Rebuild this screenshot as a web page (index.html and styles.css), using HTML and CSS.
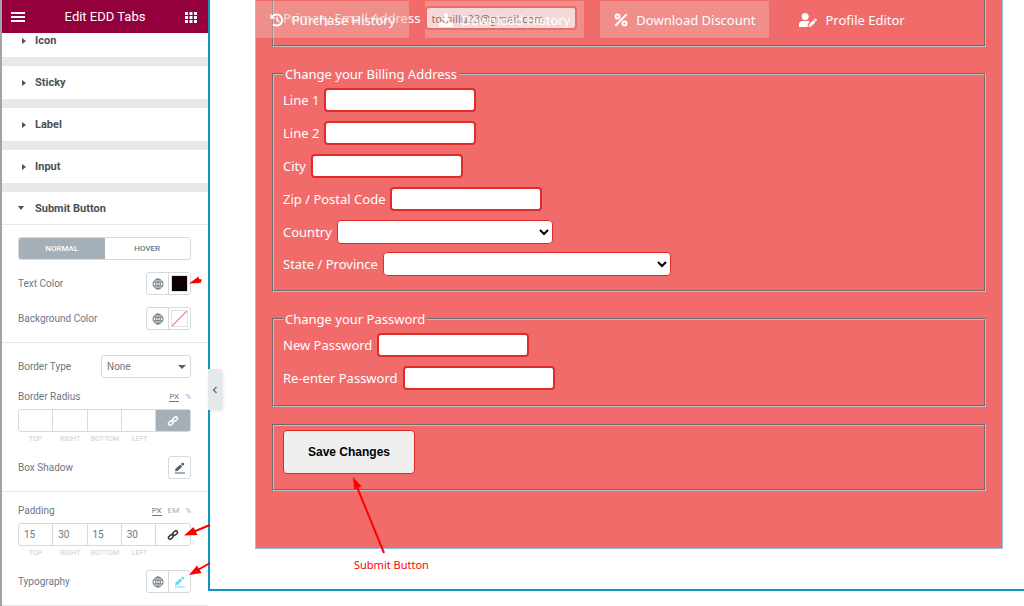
FILE: index.html
```html
<!DOCTYPE html>
<html lang="en">
<head>
    <meta charset="UTF-8">
    <meta name="viewport" content="width=device-width, initial-scale=1.0">
    <title>Edit EDD Tabs</title>
    <link rel="stylesheet" href="styles.css">
</head>
<body>
    <!-- shared icons -->
    <svg class="sprite" aria-hidden="true">
        <symbol id="globe" viewBox="0 0 12 12">
            <g fill="none" stroke="currentColor">
                <circle cx="6" cy="6" r="5"/>
                <ellipse cx="6" cy="6" rx="2.3" ry="5"/>
                <path d="M1.4 4.2h9.2M1.4 7.8h9.2M6 1v10"/>
            </g>
        </symbol>
        <symbol id="pencil" viewBox="0 0 12 12">
            <path fill="currentColor" d="M1 9.3 1.5 6.8 6.3 2.6 8.2 4.7 3.5 8.9zM7 2 8.2 .8Q8.8 .3 9.4.9L10 1.5Q10.5 2.2 10 2.8L8.9 4zM1 10.5h10v1H1z"/>
        </symbol>
        <symbol id="link" viewBox="0 0 12 12">
            <g fill="none" stroke="currentColor" stroke-width="1.5">
                <rect x="-2.6" y="-1.6" width="5.2" height="3.2" rx="1.6" transform="translate(3.8 8) rotate(-45)"/>
                <rect x="-2.6" y="-1.6" width="5.2" height="3.2" rx="1.6" transform="translate(8.2 4) rotate(-45)"/>
            </g>
        </symbol>
    </svg>

    <aside class="panel">
        <header class="panel-header">
            <button class="icon-btn" aria-label="Menu">
                <svg width="14" height="12" viewBox="0 0 14 12" fill="#fff"><path d="M0 1h14v2H0zM0 5h14v2H0zM0 9h14v2H0z"/></svg>
            </button>
            <h1>Edit EDD Tabs</h1>
            <button class="icon-btn" aria-label="Widgets">
                <svg width="12" height="12" viewBox="0 0 12 12" fill="#fff"><path d="M0 1h3v3H0zM4.5 1h3v3h-3zM9 1h3v3H9zM0 5h3v3H0zM4.5 5h3v3h-3zM9 5h3v3H9zM0 9h3v3H0zM4.5 9h3v3h-3zM9 9h3v3H9z"/></svg>
            </button>
        </header>

        <div class="sections">
            <button class="section-title"><span class="caret"></span>Icon</button>
            <button class="section-title"><span class="caret"></span>Sticky</button>
            <button class="section-title"><span class="caret"></span>Label</button>
            <button class="section-title"><span class="caret"></span>Input</button>
            <button class="section-title open"><span class="caret"></span>Submit Button</button>
        </div>

        <div class="group">
            <div class="tabs">
                <button class="tab active">NORMAL</button>
                <button class="tab">HOVER</button>
            </div>
            <div class="control">
                <span>Text Color</span>
                <div class="btn-set">
                    <button aria-label="Global color"><svg class="globe"><use href="#globe"/></svg></button>
                    <button aria-label="Pick text color"><span class="swatch black"></span></button>
                </div>
            </div>
            <div class="control">
                <span>Background Color</span>
                <div class="btn-set">
                    <button aria-label="Global color"><svg class="globe"><use href="#globe"/></svg></button>
                    <button aria-label="Pick background color"><span class="swatch empty"></span></button>
                </div>
            </div>
        </div>

        <div class="group">
            <div class="control">
                <label for="border-type">Border Type</label>
                <div class="select-wrap">
                    <select id="border-type"><option>None</option></select>
                </div>
            </div>
            <div class="dimension">
                <div class="units"><span>Border Radius</span><a href="#" class="on">PX</a><a href="#">%</a></div>
                <div class="dims">
                    <input type="text" id="r-top"><input type="text" id="r-right"><input type="text" id="r-bottom"><input type="text" id="r-left">
                    <button class="linked" aria-label="Link values"><svg><use href="#link"/></svg></button>
                </div>
                <div class="dim-labels"><label for="r-top">TOP</label><label for="r-right">RIGHT</label><label for="r-bottom">BOTTOM</label><label for="r-left">LEFT</label></div>
            </div>
            <div class="control">
                <span>Box Shadow</span>
                <div class="btn-set">
                    <button aria-label="Edit shadow"><svg><use href="#pencil"/></svg></button>
                </div>
            </div>
        </div>

        <div class="group">
            <div class="dimension">
                <div class="units"><span>Padding</span><a href="#" class="on">PX</a><a href="#">EM</a><a href="#">%</a></div>
                <div class="dims">
                    <input type="text" id="p-top" value="15"><input type="text" id="p-right" value="30"><input type="text" id="p-bottom" value="15"><input type="text" id="p-left" value="30">
                    <button aria-label="Link values"><svg><use href="#link"/></svg></button>
                </div>
                <div class="dim-labels"><label for="p-top">TOP</label><label for="p-right">RIGHT</label><label for="p-bottom">BOTTOM</label><label for="p-left">LEFT</label></div>
            </div>
            <div class="control">
                <span>Typography</span>
                <div class="btn-set">
                    <button aria-label="Global font"><svg class="globe"><use href="#globe"/></svg></button>
                    <button class="blue" aria-label="Edit typography"><svg><use href="#pencil"/></svg></button>
                </div>
            </div>
        </div>
    </aside>

    <main class="preview">
        <button class="collapse" aria-label="Hide panel">
            <svg width="6" height="8" viewBox="0 0 6 8" fill="none" stroke="#6d7882" stroke-width="1.5"><path d="M4.5 1 1.5 4l3 3"/></svg>
        </button>

        <div class="widget">
            <nav class="edd-tabs">
                <a href="#">
                    <svg width="14" height="14" viewBox="0 0 14 14"><path d="M2.6 3.3A5.5 5.5 0 1 1 3 11.2" fill="none" stroke="#fff" stroke-width="2"/><path d="M.3 .8v5h5z" fill="#fff"/><path d="M7.2 4v3.3l2 1.5" fill="none" stroke="#fff" stroke-width="1.6"/></svg>
                    Purchase History
                </a>
                <a href="#">
                    <svg width="14" height="14" viewBox="0 0 14 14" fill="#fff"><path d="M5.4 0h3.2v5h3L7 9.6 2.4 5h3zM.7 9.3h3.2L7 12l3.1-2.7h3.2q.7 0 .7.7v3.3q0 .7-.7.7H.7Q0 14 0 13.3V10q0-.7.7-.7z"/></svg>
                    Download History
                </a>
                <a href="#">
                    <svg width="14" height="14" viewBox="0 0 14 14" fill="none" stroke="#fff" stroke-width="2"><circle cx="3.5" cy="3.5" r="2"/><circle cx="10.5" cy="10.5" r="2"/><path d="M12.7 1.3 1.3 12.7"/></svg>
                    Download Discount
                </a>
                <a href="#" class="current">
                    <svg width="18" height="14" viewBox="0 0 18 14" fill="#fff"><circle cx="6.2" cy="3.5" r="3.5"/><path d="M0 14v-2.5Q0 8 3.7 8h5q1.2 0 2.2.8L9 10.8 8.6 14zM9.7 14l.4-2.6 4.4-4.4 2 2-4.4 4.5zM15.1 6.4l.8-.7q.4-.4.8 0l1.1 1.1q.4.4 0 .8l-.8.8z"/></svg>
                    Profile Editor
                </a>
            </nav>

            <form class="profile">
                <fieldset class="email">
                    <div class="field"><label for="email">Primary Email Address</label><input type="email" id="email" value="tomillu23@gmail.com"></div>
                </fieldset>
                <fieldset>
                    <legend>Change your Billing Address</legend>
                    <div class="field"><label for="line1">Line 1</label><input type="text" id="line1"></div>
                    <div class="field"><label for="line2">Line 2</label><input type="text" id="line2"></div>
                    <div class="field"><label for="city">City</label><input type="text" id="city"></div>
                    <div class="field"><label for="zip">Zip / Postal Code</label><input type="text" id="zip"></div>
                    <div class="field drop"><label for="country">Country</label><select id="country"><option></option></select></div>
                    <div class="field drop"><label for="state">State / Province</label><select id="state" class="wide"><option></option></select></div>
                </fieldset>
                <fieldset>
                    <legend>Change your Password</legend>
                    <div class="field"><label for="pass1">New Password</label><input type="password" id="pass1"></div>
                    <div class="field"><label for="pass2">Re-enter Password</label><input type="password" id="pass2"></div>
                </fieldset>
                <fieldset class="submit">
                    <button type="button" class="save">Save Changes</button>
                </fieldset>
            </form>
        </div>
    </main>

    <!-- arrows and note on top of the page -->
    <svg class="marks" width="440" height="606" viewBox="0 0 440 606" fill="#fe0000" stroke="#fe0000">
        <path stroke="none" d="M189 283.5 198.5 276.5 199 279 202 279.5 200.5 283z"/>
        <path stroke-width="2" d="M210 525 193 532"/><path stroke="none" d="M184 535.5 193.5 527 197.5 535z"/>
        <path stroke-width="2" d="M210 563 196 571"/><path stroke="none" d="M189 575 197 565.5 201.5 573z"/>
        <path stroke-width="2" d="M384 553 357 487"/><path stroke="none" d="M353 477 354 489.5 361.5 486.5z"/>
    </svg>
    <p class="note">Submit Button</p>
</body>
</html>
```
FILE: styles.css
```css
* {
    box-sizing: border-box;
}
body {
    position: relative;
    display: flex;
    min-height: 100vh;
    margin: 0;
    background: #fff;
    color: #6d7882;
    font-family: Roboto, sans-serif;
    font-size: 10px;
    overflow: hidden;
}
button, input, select {
    margin: 0;
    padding: 0;
    border: 0;
    font-family: inherit;
    font-size: inherit;
    color: inherit;
}
button {
    background: none;
    cursor: pointer;
}
a {
    text-decoration: none;
    color: inherit;
}
.sprite {
    position: absolute;
    width: 0;
    height: 0;
}

/* left panel */
.panel {
    flex: none;
    width: 208px;
    border-left: 2px solid #a3a3a3;
    background: #fff;
}
.panel-header {
    position: relative;
    z-index: 1;
    display: flex;
    align-items: center;
    justify-content: space-between;
    height: 33px;
    padding: 0 11px 0 9px;
    background: #93003c;
    color: #fff;
}
.panel-header h1 {
    margin: 0;
    font-size: 13px;
    font-weight: 400;
}
.icon-btn {
    display: flex;
}
.sections {
    display: flex;
    flex-direction: column;
    gap: 9px;
    margin-top: -9px;
    background: #e6e9ec;
}
.section-title {
    display: flex;
    align-items: center;
    height: 33px;
    padding-left: 16px;
    background: #fff;
    color: #495157;
    font-size: 11px;
    font-weight: 700;
}
.caret {
    width: 17px;
}
.caret::before {
    content: "";
    display: block;
    width: 0;
    margin-left: 4px;
    border: 3px solid transparent;
    border-left: 4px solid #495157;
    border-right: 0;
}
.open {
    border-bottom: 1px solid #e6e9ec;
}
.open .caret::before {
    margin-left: 0;
    border: 3px solid transparent;
    border-top: 4px solid #495157;
    border-bottom: 0;
}
.group {
    display: flex;
    flex-direction: column;
    gap: 12px;
    padding: 12px 17px 12px 16px;
    border-bottom: 1px solid #e6e9ec;
}
.tabs {
    display: flex;
    height: 23px;
    border: 1px solid #d5dadf;
    border-radius: 3px;
    overflow: hidden;
}
.tab {
    flex: 1;
    font-size: 8px;
    font-weight: 500;
}
.tab.active {
    background: #a4afb7;
    color: #fff;
}
.control {
    display: flex;
    align-items: center;
    justify-content: space-between;
}
.btn-set {
    display: flex;
    height: 23px;
    border: 1px solid #d5dadf;
    border-radius: 3px;
}
.btn-set button {
    display: flex;
    align-items: center;
    justify-content: center;
    width: 21px;
    color: #556068;
}
.btn-set button + button {
    width: 22px;
    border-left: 1px solid #d5dadf;
}
.btn-set svg, .dims svg {
    width: 12px;
    height: 12px;
}
.btn-set .globe {
    color: #6d7882;
}
.btn-set .blue {
    color: #71d7f7;
}
.swatch {
    width: 17px;
    height: 17px;
    border: 1px solid #e0e0e0;
}
.swatch.black {
    background: #0d0000;
}
.swatch.empty {
    background: linear-gradient(to bottom right, #fff 46%, #f77 48%, #f77 52%, #fff 54%);
}
.select-wrap {
    position: relative;
    width: 90px;
}
.select-wrap::after {
    content: "";
    position: absolute;
    top: 10px;
    right: 5px;
    border: 4px solid transparent;
    border-top-color: #556068;
    border-bottom: 0;
    pointer-events: none;
}
.select-wrap select {
    width: 100%;
    height: 23px;
    padding-left: 5px;
    border: 1px solid #d5dadf;
    border-radius: 3px;
    background: #fff;
    appearance: none;
}
.units {
    display: flex;
    align-items: center;
    height: 13px;
    margin-bottom: 6px;
}
.units span {
    flex: 1;
}
.units a {
    margin-left: 6px;
    font-size: 8px;
    line-height: 9px;
    color: #a4afb7;
}
.units .on {
    border-bottom: 1px solid #6d7882;
    color: #6d7882;
}
.dims {
    display: flex;
    height: 23px;
    border: 1px solid #d5dadf;
    border-radius: 3px;
}
.dims input {
    flex: 1;
    width: 0;
    padding-left: 5px;
    border-right: 1px solid #d5dadf;
    background: none;
}
.dims button {
    display: flex;
    align-items: center;
    justify-content: center;
    width: 34px;
    color: #333;
}
.dims .linked {
    background: #a4afb7;
    color: #fff;
}
.dim-labels {
    display: flex;
    margin-top: 3px;
    padding-right: 34px;
    font-size: 7px;
    line-height: 9px;
    color: #c8ced4;
}
.dim-labels label {
    flex: 1;
    width: 0;
    text-align: center;
}

/* page preview */
.preview {
    position: relative;
    flex: 1;
    align-self: flex-start;
    min-width: 0;
    padding: 0 21px 40px 45px;
    border-left: 2px solid #0f94bd;
    border-bottom: 2px solid #0f94bd;
    color: #fff;
    font-family: "Noto Sans", sans-serif;
    font-size: 13px;
}
.collapse {
    position: absolute;
    top: 369px;
    left: -2px;
    display: flex;
    align-items: center;
    justify-content: center;
    width: 14px;
    height: 41px;
    border-radius: 0 3px 3px 0;
    background: #e6e9ec;
    box-shadow: 1px 1px 3px rgba(0, 0, 0, 0.12);
}
.widget {
    position: relative;
    padding: 0 16px 57px;
    border: 1px solid #8fc6de;
    border-top: 0;
    background: #f26b6b;
}
.edd-tabs {
    position: absolute;
    top: 1px;
    left: 0;
    display: flex;
    gap: 16px;
}
.edd-tabs a {
    display: flex;
    align-items: center;
    gap: 8px;
    height: 37px;
    padding: 0 14px;
    background: rgba(238, 178, 174, 0.5);
    white-space: nowrap;
}
.edd-tabs .current {
    background: none;
}
fieldset {
    min-width: 0;
    margin: 0 0 17px;
    padding: 4px 9px 15px;
    border: 2px groove #c0c0c0;
}
.email {
    padding-top: 6px;
    border-top: 0;
}
legend {
    padding: 0 2px;
    line-height: 20px;
}
.field {
    display: flex;
    align-items: center;
    gap: 5px;
    height: 24px;
    margin-bottom: 9px;
    white-space: nowrap;
}
.field.drop {
    height: 23px;
}
.field:last-child {
    margin-bottom: 0;
}
.field input, .field select {
    width: 152px;
    height: 24px;
    padding: 0 4px;
    border: 2px solid #e02b2b;
    border-radius: 4px;
    background: #fff;
    color: #333;
    font-size: 11px;
}
.field select {
    width: 216px;
    border-width: 1px;
    color: #000;
}
.field .wide {
    width: 288px;
}
.submit {
    margin-bottom: 0;
}
.save {
    display: block;
    padding: 13px 24px;
    border: 1px solid #e02b2b;
    border-radius: 4px;
    background: #efefef;
    color: #000;
    font-family: "Liberation Sans", Arial, sans-serif;
    font-size: 12px;
    font-weight: 700;
    line-height: 16px;
}

/* annotations */
.marks {
    position: absolute;
    top: 0;
    left: 0;
    pointer-events: none;
}
.note {
    position: absolute;
    top: 557px;
    left: 354px;
    margin: 0;
    color: #fe0000;
    font-family: "Noto Sans", sans-serif;
    font-size: 11px;
    line-height: 15px;
}
```
